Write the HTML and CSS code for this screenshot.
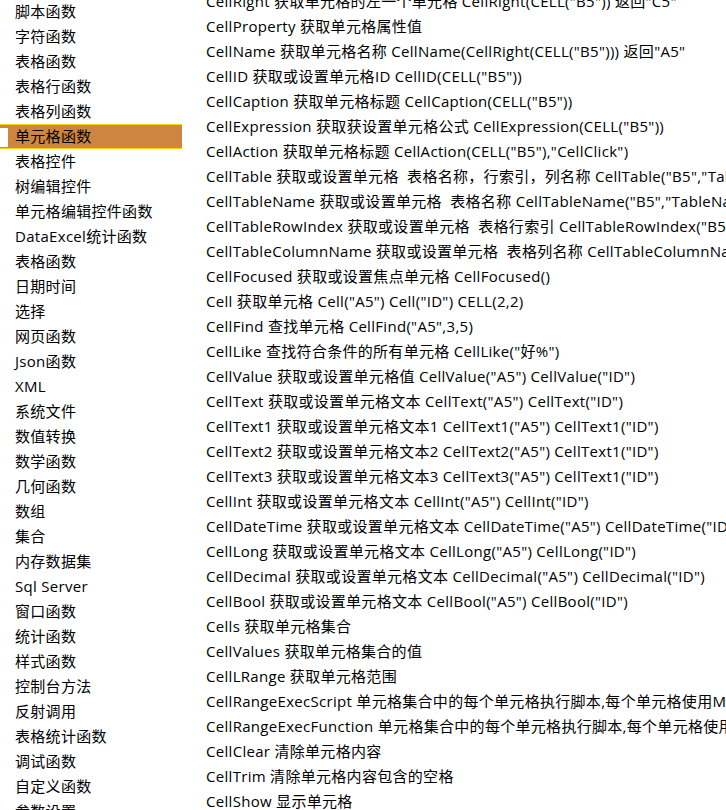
FILE: index.html
```html
<!DOCTYPE html>
<html lang="zh-CN">
<head>
    <meta charset="UTF-8">
    <meta name="viewport" content="width=device-width, initial-scale=1.0">
    <title>单元格函数</title>
    <link rel="stylesheet" href="styles.css">
</head>
<body>
    <div class="page">
        <!-- Category menu -->
        <ul class="menu">
            <li>脚本函数</li>
            <li>字符函数</li>
            <li>表格函数</li>
            <li>表格行函数</li>
            <li>表格列函数</li>
            <li class="active">单元格函数</li>
            <li>表格控件</li>
            <li>树编辑控件</li>
            <li>单元格编辑控件函数</li>
            <li>DataExcel统计函数</li>
            <li>表格函数</li>
            <li>日期时间</li>
            <li>选择</li>
            <li>网页函数</li>
            <li>Json函数</li>
            <li>XML</li>
            <li>系统文件</li>
            <li>数值转换</li>
            <li>数学函数</li>
            <li>几何函数</li>
            <li>数组</li>
            <li>集合</li>
            <li>内存数据集</li>
            <li>Sql Server</li>
            <li>窗口函数</li>
            <li>统计函数</li>
            <li>样式函数</li>
            <li>控制台方法</li>
            <li>反射调用</li>
            <li>表格统计函数</li>
            <li>调试函数</li>
            <li>自定义函数</li>
            <li>参数设置</li>
        </ul>

        <!-- Function list for the selected category -->
        <ul class="funcs">
            <li>CellRight 获取单元格的左一个单元格 CellRight(CELL("B5")) 返回"C5"</li>
            <li>CellProperty 获取单元格属性值</li>
            <li>CellName 获取单元格名称 CellName(CellRight(CELL("B5"))) 返回"A5"</li>
            <li>CellID 获取或设置单元格ID CellID(CELL("B5"))</li>
            <li>CellCaption 获取单元格标题 CellCaption(CELL("B5"))</li>
            <li>CellExpression 获取获设置单元格公式 CellExpression(CELL("B5"))</li>
            <li>CellAction 获取单元格标题 CellAction(CELL("B5"),"CellClick")</li>
            <li>CellTable 获取或设置单元格&nbsp; 表格名称，行索引，列名称 CellTable("B5","TableName",1,"Column1")</li>
            <li>CellTableName 获取或设置单元格&nbsp; 表格名称 CellTableName("B5","TableName")</li>
            <li>CellTableRowIndex 获取或设置单元格&nbsp; 表格行索引 CellTableRowIndex("B5",1)</li>
            <li>CellTableColumnName 获取或设置单元格&nbsp; 表格列名称 CellTableColumnName("B5","Column1")</li>
            <li>CellFocused 获取或设置焦点单元格 CellFocused()</li>
            <li>Cell 获取单元格 Cell("A5") Cell("ID") CELL(2,2)</li>
            <li>CellFind 查找单元格 CellFind("A5",3,5)</li>
            <li>CellLike 查找符合条件的所有单元格 CellLike("好%")</li>
            <li>CellValue 获取或设置单元格值 CellValue("A5") CellValue("ID")</li>
            <li>CellText 获取或设置单元格文本 CellText("A5") CellText("ID")</li>
            <li>CellText1 获取或设置单元格文本1 CellText1("A5") CellText1("ID")</li>
            <li>CellText2 获取或设置单元格文本2 CellText2("A5") CellText1("ID")</li>
            <li>CellText3 获取或设置单元格文本3 CellText3("A5") CellText1("ID")</li>
            <li>CellInt 获取或设置单元格文本 CellInt("A5") CellInt("ID")</li>
            <li>CellDateTime 获取或设置单元格文本 CellDateTime("A5") CellDateTime("ID")</li>
            <li>CellLong 获取或设置单元格文本 CellLong("A5") CellLong("ID")</li>
            <li>CellDecimal 获取或设置单元格文本 CellDecimal("A5") CellDecimal("ID")</li>
            <li>CellBool 获取或设置单元格文本 CellBool("A5") CellBool("ID")</li>
            <li>Cells 获取单元格集合</li>
            <li>CellValues 获取单元格集合的值</li>
            <li>CellLRange 获取单元格范围</li>
            <li>CellRangeExecScript 单元格集合中的每个单元格执行脚本,每个单元格使用Me表示</li>
            <li>CellRangeExecFunction 单元格集合中的每个单元格执行脚本,每个单元格使用Me表示</li>
            <li>CellClear 清除单元格内容</li>
            <li>CellTrim 清除单元格内容包含的空格</li>
            <li>CellShow 显示单元格</li>
        </ul>
    </div>
</body>
</html>
```

FILE: styles.css
```css
body {
    margin: 0;
    padding: 0;
    background: #fff;
    color: #000;
    font-family: "Open Sans", "Noto Sans CJK SC", sans-serif;
    font-size: 15px;
    letter-spacing: 0.3px;
    overflow: hidden;
}

.page {
    display: flex;
    align-items: flex-start;
    height: 810px;
    overflow: hidden;
}

ul {
    list-style: none;
    margin: 0;
    padding: 0;
}

li {
    height: 25px;
    line-height: 25px;
    white-space: nowrap;
}

/* --- left category menu --- */
.menu {
    flex: 0 0 182px;
    margin-top: -1px;
}

.menu li {
    box-sizing: border-box;
    padding-left: 15px;
    position: relative;
}

.menu li.active {
    background: #cd853f;
    border-top: 1px solid #ffd200;
    border-bottom: 1px solid #ffd200;
    line-height: 23px;
}

/* small white marker on the selected row */
.menu li.active::before {
    content: '';
    position: absolute;
    left: 0;
    top: 3px;
    width: 8px;
    height: 19px;
    background: #fff;
}

/* --- right function list --- */
.funcs {
    flex: 1;
    margin-top: -11px;
    padding-left: 24px;
    min-width: 0;
}
```
